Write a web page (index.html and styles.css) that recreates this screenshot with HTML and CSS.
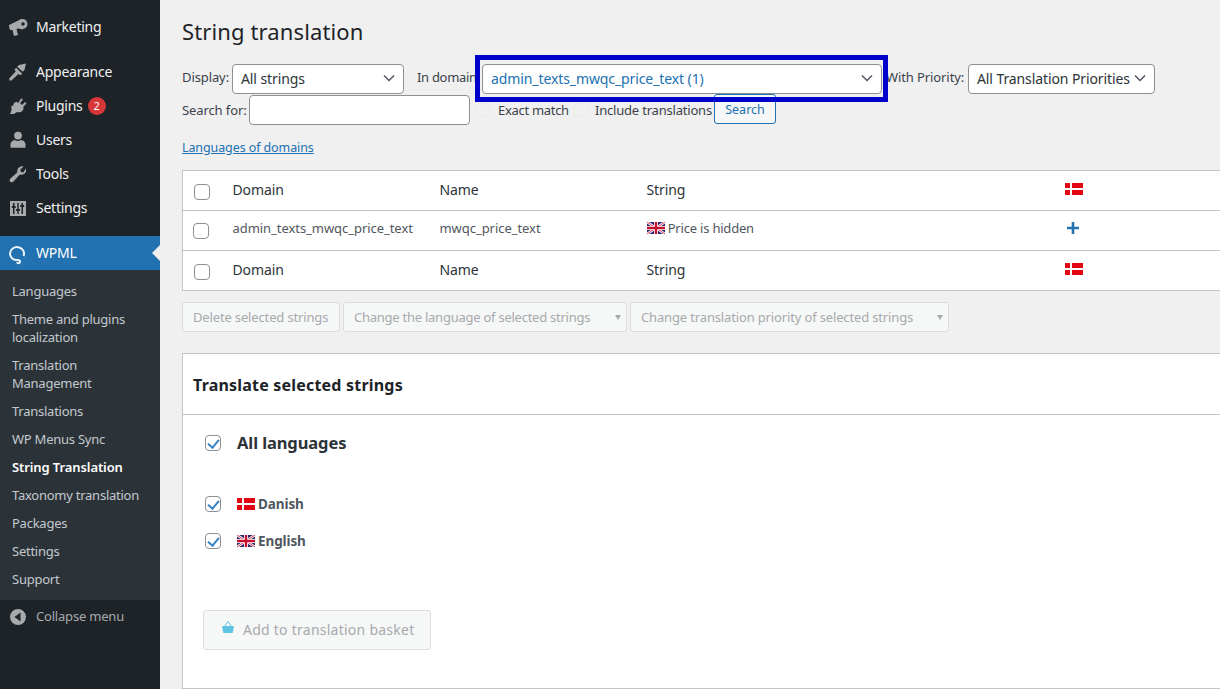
FILE: index.html
```html
<!DOCTYPE html>
<html>
<head>
    <meta charset="UTF-8">
    <title>String translation</title>
    <link rel="stylesheet" href="styles.css">
</head>
<body>
    <div class="sidebar">
        <ul class="menu">
            <li class="menu-item gap-after">
                <svg class="icon" viewBox="0 0 20 20"><path d="M1 8 13.500 2 15 12.500 10 11.500 8.500 12 10 18 6 19 4.500 13 2.200 13Q1 11 1 8z"/><circle cx="14.500" cy="7" r="5"/><circle class="icon-hole" cx="15" cy="7" r="1.800"/></svg>
                <span>Marketing</span>
            </li>
            <li class="menu-item">
                <svg class="icon" viewBox="0 0 20 20"><path d="M11 3l7-1.500-1.500 6.500-1.800 1.800L9.200 4.800zM8.200 5.800l6 6-1.800 1.400-2-1.200-6.900 6.500H1.500l-.3-2 6.500-6.900-1.200-2z"/></svg>
                <span>Appearance</span>
            </li>
            <li class="menu-item">
                <svg class="icon" viewBox="0 0 20 20"><path d="M13.200 2.200 15 3.800l-3 3.200 2 2 3-3.100 1.500 1.600-3.200 3.200c.8 2.200-.5 4.400-2.700 5.300-1.200.4-2.500.4-3.700-.1L6 18H2l1.500-3.700-.2-4.300 1.700-.3 1.200-3 2.800-.9 1.200 1.100z"/></svg>
                <span>Plugins</span>
                <span class="badge">2</span>
            </li>
            <li class="menu-item">
                <svg class="icon" viewBox="0 0 20 20"><circle cx="10" cy="5.600" r="3.900"/><path d="M2.500 17.800v-3.300c0-2.800 2.500-4.300 4.500-4.500 1.800 1.300 4.200 1.300 6 0 2 .2 4.500 1.700 4.500 4.500v3.300z"/></svg>
                <span>Users</span>
            </li>
            <li class="menu-item">
                <svg class="icon" viewBox="0 0 20 20"><path d="M17.800 4.500c.7 2 .1 4-1.400 5.300-1.300 1-3 1.300-4.500.8l-6.400 7c-.9 1-2.400 1-3.200.1-.9-.8-.8-2.200.1-3.100l7.100-6.300c-.5-1.600-.1-3.300 1.100-4.600 1.300-1.400 3.200-1.900 5-1.300l-3.200 3 .4 2.500 2.500.6z"/></svg>
                <span>Tools</span>
            </li>
            <li class="menu-item">
                <svg class="icon" viewBox="0 0 20 20"><path fill-rule="evenodd" d="M2 3h16v15H2zM5 5v3H3.800v2H5v6h1.500v-6h1.200V8H6.500V5zM9.300 5v6H8.100v2h1.200v3h1.400v-3h1.200v-2h-1.200V5zM13.500 5v2h-1.200v2h1.200v7H15V9h1.200V7H15V5z"/></svg>
                <span>Settings</span>
            </li>
        </ul>

        <div class="menu-item current">
            <svg class="icon wpml-icon" viewBox="0 0 20 20"><path d="M15.500 13A7 6.500 0 1 0 10 17c1.500 0 2 1 2 1.800s-.8 1.400-1.500 1.400-1.300-.6-1.300-1.200"/></svg>
            <span>WPML</span>
        </div>
        <ul class="submenu">
            <li>Languages</li>
            <li>Theme and plugins localization</li>
            <li>Translation Management</li>
            <li>Translations</li>
            <li>WP Menus Sync</li>
            <li class="active">String Translation</li>
            <li>Taxonomy translation</li>
            <li>Packages</li>
            <li>Settings</li>
            <li>Support</li>
        </ul>
        <div class="menu-item collapse">
            <svg class="icon" viewBox="0 0 20 20"><path fill-rule="evenodd" d="M10 2a8 8 0 1 1 0 16 8 8 0 0 1 0-16zM12.500 5.500 6.500 10l6 4.500z"/></svg>
            <span>Collapse menu</span>
        </div>
    </div>

    <div class="main">
        <h1>String translation</h1>

        <div class="filter-row">
            <label class="lbl display-lbl">Display:</label>
            <div class="select display-select">All strings<svg class="chev" viewBox="0 0 12 8"><path d="M1 1.500 6 6.500l5-5"/></svg></div>
            <label class="lbl domain-lbl">In domain</label>
            <div class="select domain-select">admin_texts_mwqc_price_text (1)<svg class="chev" viewBox="0 0 12 8"><path d="M1 1.500 6 6.500l5-5"/></svg></div>
            <label class="lbl priority-lbl">With Priority:</label>
            <div class="select priority-select">All Translation Priorities<svg class="chev" viewBox="0 0 12 8"><path d="M1 1.500 6 6.500l5-5"/></svg></div>
        </div>

        <div class="search-row">
            <label class="lbl search-lbl">Search for:</label>
            <input class="search-input" type="text">
            <span class="ghost-check"></span>
            <label class="lbl exact">Exact match</label>
            <span class="ghost-check"></span>
            <label class="lbl include">Include translations</label>
            <button class="search-btn">Search</button>
        </div>

        <a class="lang-link" href="#">Languages of domains</a>

        <table class="strings">
            <tr class="head">
                <td class="c-check"><input type="checkbox" class="chk"></td>
                <td class="c-domain">Domain</td>
                <td class="c-name">Name</td>
                <td class="c-string">String</td>
                <td><svg class="flag" viewBox="0 0 18 12"><use href="#dk"/></svg></td>
            </tr>
            <tr class="row">
                <td class="c-check"><input type="checkbox" class="chk row-chk"></td>
                <td>admin_texts_mwqc_price_text</td>
                <td>mwqc_price_text</td>
                <td class="c-value"><svg class="flag" viewBox="0 0 18 12"><use href="#uk"/></svg> Price is hidden</td>
                <td><svg class="plus" viewBox="0 0 14 14"><path d="M5.700 1h2.600v4.700H13v2.600H8.300V13H5.700V8.300H1V5.700h4.700z"/></svg></td>
            </tr>
            <tr class="head">
                <td class="c-check"><input type="checkbox" class="chk"></td>
                <td>Domain</td>
                <td>Name</td>
                <td>String</td>
                <td><svg class="flag" viewBox="0 0 18 12"><use href="#dk"/></svg></td>
            </tr>
        </table>

        <div class="bulk-row">
            <button class="bulk b-delete" disabled>Delete selected strings</button>
            <button class="bulk b-lang" disabled>Change the language of selected strings<i></i></button>
            <button class="bulk b-prio" disabled>Change translation priority of selected strings<i></i></button>
        </div>

        <div class="panel">
            <h3>Translate selected strings</h3>
            <div class="panel-body">
                <div class="lang-all">
                    <input type="checkbox" class="chk" checked>
                    <strong>All languages</strong>
                </div>
                <div class="lang-line first">
                    <input type="checkbox" class="chk" checked>
                    <svg class="flag" viewBox="0 0 18 12"><use href="#dk"/></svg>
                    <span>Danish</span>
                </div>
                <div class="lang-line">
                    <input type="checkbox" class="chk" checked>
                    <svg class="flag" viewBox="0 0 18 12"><use href="#uk"/></svg>
                    <span>English</span>
                </div>
                <button class="basket-btn" disabled>
                    <svg class="basket" viewBox="0 0 14 14"><path d="M1 6h12l-1.300 7H2.300z"/><path class="basket-handle" d="M3.800 6 7 1.500 10.200 6"/></svg>
                    Add to translation basket
                </button>
            </div>
        </div>

        <div class="highlight"></div>
    </div>

    <svg class="defs" width="0" height="0">
        <symbol id="dk" viewBox="0 0 18 12">
            <rect width="18" height="12" fill="#e20613"/>
            <rect x="5" width="2" height="12" fill="#fff"/>
            <rect y="5" width="18" height="2" fill="#fff"/>
        </symbol>
        <symbol id="uk" viewBox="0 0 18 12">
            <rect width="18" height="12" fill="#2b2a6b"/>
            <path d="M0 0 18 12M18 0 0 12" stroke="#fff" stroke-width="2.400"/>
            <path d="M0 0 18 12M18 0 0 12" stroke="#c8102e" stroke-width=".8"/>
            <path d="M9 0v12M0 6h18" stroke="#fff" stroke-width="4"/>
            <path d="M9 0v12M0 6h18" stroke="#c8102e" stroke-width="2.400"/>
        </symbol>
    </svg>
</body>
</html>
```

FILE: styles.css
```css
* {
    box-sizing: border-box;
}

html, body {
    margin: 0;
    height: 689px;
    overflow: hidden;
}

body {
    display: flex;
    font-family: "Noto Sans", sans-serif;
    font-size: 13px;
    color: #3c434a;
    background: #f0f0f1;
}

.defs {
    position: absolute;
}

/* sidebar */
.sidebar {
    width: 160px;
    flex: none;
    background: #1d2327;
    padding-top: 10px;
    color: #f0f0f1;
}

.menu, .submenu {
    list-style: none;
    margin: 0;
    padding: 0;
}

.menu {
    margin-bottom: 11px;
}

.menu-item {
    height: 34px;
    display: flex;
    align-items: center;
    font-size: 14px;
    letter-spacing: -0.25px;
    position: relative;
}

.menu-item span {
    padding-bottom: 2px;
}

.menu-item .icon {
    width: 20px;
    height: 20px;
    margin: 0 8px;
    fill: #a7aaad;
    flex: none;
    overflow: visible;
}

.menu-item .icon-hole {
    fill: #1d2327;
}

.gap-after {
    margin-bottom: 11px;
}

.menu-item .badge {
    width: 18px;
    height: 18px;
    padding: 0;
    border-radius: 50%;
    background: #d63638;
    color: #fff;
    font-size: 11px;
    line-height: 18px;
    text-align: center;
    margin-left: 5px;
    letter-spacing: 0;
}

.current {
    background: #2271b1;
    color: #fff;
}

.menu-item .wpml-icon {
    fill: none;
    stroke: #e8f3fb;
    stroke-width: 2;
}

.current::after {
    content: "";
    position: absolute;
    right: 0;
    top: 9px;
    border: 8px solid transparent;
    border-right-color: #f0f0f1;
    border-left-width: 0;
}

.submenu {
    background: #2c3338;
    padding: 7px 0;
    font-size: 13px;
    letter-spacing: -0.25px;
    color: #c3c9cf;
}

.submenu li {
    padding: 5px 12px;
    line-height: 18px;
}

.submenu .active {
    color: #fff;
    font-weight: 600;
    letter-spacing: -0.1px;
}

.collapse {
    font-size: 13px;
    color: #a7aaad;
    letter-spacing: -0.2px;
}

/* main */
.main {
    flex: 1;
    min-width: 0;
    padding-left: 22px;
    position: relative;
    overflow: hidden;
}

h1 {
    margin: 0;
    padding-top: 15px;
    height: 64px;
    font-size: 22px;
    line-height: 32px;
    font-weight: 400;
    color: #1d2327;
    letter-spacing: 0.12px;
}

.filter-row, .search-row {
    display: flex;
    align-items: center;
}

.filter-row {
    height: 30px;
}

.filter-row .lbl {
    padding-bottom: 4px;
}

.search-row {
    height: 31px;
}

.lbl {
    letter-spacing: -0.1px;
    white-space: nowrap;
}

.display-lbl {
    width: 46px;
}

.search-lbl {
    width: 63px;
}

.select {
    height: 30px;
    display: flex;
    align-items: center;
    justify-content: space-between;
    padding: 0 8px 2px 8px;
    background: #fff;
    border: 1px solid #8c8f94;
    border-radius: 4px;
    font-size: 14px;
    color: #2c3338;
    letter-spacing: -0.1px;
    white-space: nowrap;
}

.chev {
    width: 12px;
    height: 8px;
    fill: none;
    stroke: #50575e;
    stroke-width: 1.500;
}

.display-select {
    width: 172px;
    margin-left: 4px;
}

.domain-lbl {
    margin-left: 13px;
    width: 58px;
    letter-spacing: -0.3px;
}

.domain-select {
    width: 400px;
    margin-left: 7px;
    color: #2271b1;
}

.priority-lbl {
    margin-left: 4px;
    width: 79px;
}

.priority-select {
    width: 187px;
    margin-left: 3px;
}

.search-input {
    width: 221px;
    height: 30px;
    margin: 1px 0 0 4px;
    background: #fff;
    border: 1px solid #8c8f94;
    border-radius: 4px;
}

.ghost-check {
    width: 14px;
    height: 14px;
    margin-left: 6px;
    border: 1px solid #ebebec;
    border-radius: 4px;
}

.exact {
    margin-left: 8px;
    width: 70px;
    letter-spacing: -0.3px;
}

.include {
    margin-left: 7px;
    width: 117px;
    letter-spacing: -0.2px;
}

.search-btn {
    width: 62px;
    height: 30px;
    padding: 2px 0 0;
    margin: -2px 0 0 2px;
    font: inherit;
    font-size: 12.5px;
    color: #2271b1;
    background: #f6f7f7;
    border: 1px solid #2271b1;
    border-radius: 3px;
}

.lang-link {
    display: block;
    margin-top: 13px;
    height: 32px;
    line-height: 20px;
    font-size: 12.5px;
    color: #2271b1;
    letter-spacing: -0.1px;
}

/* strings table */
.strings {
    width: 1100px;
    table-layout: fixed;
    border-collapse: collapse;
    background: #fff;
    border: 1px solid #c3c4c7;
}

.strings td {
    height: 40px;
    padding: 0 10px;
    white-space: nowrap;
}

.strings tr + tr td {
    border-top: 1px solid #c3c4c7;
}

.strings .c-check {
    width: 40px;
    padding-bottom: 0;
}

.c-domain, .c-name {
    width: 207px;
}

.c-string {
    width: 418px;
}

.head td {
    padding-bottom: 2px;
    font-size: 14px;
    color: #2c3338;
    letter-spacing: -0.1px;
}

.head .flag {
    vertical-align: 0;
}

.row td {
    padding-bottom: 5px;
    letter-spacing: -0.05px;
    color: #50575e;
}

.row .c-value {
    letter-spacing: -0.2px;
}

.chk {
    appearance: none;
    display: block;
    width: 16px;
    height: 16px;
    margin: 2px 0 0 1px;
    background: #fff;
    border: 1px solid #8c8f94;
    border-radius: 4px;
    position: relative;
}

.row-chk {
    margin: 0;
}

.chk:checked::before {
    content: "";
    position: absolute;
    left: 4px;
    top: 1px;
    width: 5px;
    height: 9px;
    border: solid #3582c4;
    border-width: 0 2.500px 2.500px 0;
    transform: rotate(40deg);
}

.flag {
    width: 18px;
    height: 12px;
    vertical-align: -1px;
}

.plus {
    width: 14px;
    height: 14px;
    margin-left: 1px;
    fill: #2271b1;
    display: block;
}

/* bulk */
.bulk-row {
    display: flex;
    gap: 3px;
    margin-top: 11px;
}

.bulk {
    height: 30px;
    padding: 0 10px;
    font: inherit;
    text-align: left;
    letter-spacing: -0.15px;
    color: #a7aaad;
    background: #f6f7f7;
    border: 1px solid #dcdcde;
    border-radius: 3px;
    position: relative;
}

.b-delete {
    width: 158px;
}

.b-lang {
    width: 284px;
    letter-spacing: -0.25px;
}

.b-prio {
    width: 319px;
}

.bulk i {
    position: absolute;
    right: 5px;
    top: 12px;
    border: 3.500px solid transparent;
    border-top: 5px solid #a7aaad;
    border-bottom-width: 0;
}

/* panel */
.panel {
    margin-top: 21px;
    width: 1100px;
    height: 336px;
    background: #fff;
    border: 1px solid #c3c4c7;
}

.panel h3 {
    margin: 0;
    height: 61px;
    padding-left: 10px;
    font-size: 16px;
    line-height: 62px;
    font-weight: 700;
    color: #1d2327;
    border-bottom: 1px solid #c3c4c7;
    letter-spacing: 0.2px;
}

.panel-body {
    padding: 0 0 0 22px;
}

.lang-all {
    display: flex;
    align-items: center;
    height: 28px;
    margin-top: 14px;
    font-size: 16.5px;
    color: #2c3338;
}

.lang-all .chk, .lang-line .chk {
    margin: 0;
}

.lang-all strong {
    margin: 0 0 2px 16px;
    letter-spacing: -0.1px;
}

.lang-line {
    display: flex;
    align-items: center;
    height: 20px;
    margin-top: 17px;
    font-size: 13.5px;
    font-weight: 700;
    color: #50575e;
    letter-spacing: -0.1px;
}

.lang-line.first {
    margin-top: 37px;
}

.lang-line .flag {
    margin-left: 16px;
    margin-right: 3px;
}

.basket-btn {
    display: flex;
    align-items: center;
    width: 228px;
    height: 40px;
    margin: 59px 0 0 -2px;
    padding: 0 0 2px 17px;
    font: inherit;
    font-size: 14px;
    color: #a7aaad;
    background: #f6f7f7;
    border: 1px solid #dcdcde;
    border-radius: 3px;
    letter-spacing: 0.25px;
}

.basket {
    width: 14px;
    height: 14px;
    margin: -4px 8px 0 0;
    fill: #5fc3e4;
}

.basket-handle {
    fill: none;
    stroke: #5fc3e4;
    stroke-width: 1;
}

/* annotation drawn over the screenshot */
.highlight {
    position: absolute;
    left: 315px;
    top: 55px;
    width: 413px;
    height: 47px;
    border: 5px solid #0000cd;
    pointer-events: none;
}
```
